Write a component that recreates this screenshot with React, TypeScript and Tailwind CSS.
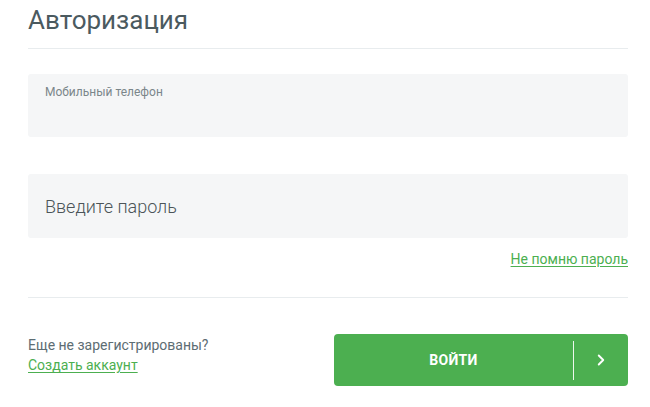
import { ChevronRight } from 'lucide-react'

export default function App() {
  return (
    <div className="w-[650px] h-[407px] bg-white font-['Roboto',sans-serif] px-[28px] pr-[22px]">
      <h1 className="pt-[4px] h-[49px] text-[26px] leading-[33px] text-[#4b5a5f] border-b border-[#e8ecee]">
        Авторизация
      </h1>

      <div className="mt-[25px] h-[63px] rounded-[3px] bg-[#f5f6f7] px-[17px] pt-[10px]">
        <div className="text-[12px] leading-[16px] text-[#7b868a]">Мобильный телефон</div>
      </div>

      <div className="mt-[37px] h-[64px] rounded-[3px] bg-[#f5f6f7] px-[17px] flex items-center">
        <span className="text-[18px] font-light text-[#4b5458] pt-[1px]">Введите пароль</span>
      </div>

      <div className="flex justify-end mt-[11px] h-[20px]">
        <a href="#" className="text-[14px] leading-[20px] text-[#4caf50] underline underline-offset-2">
          Не помню пароль
        </a>
      </div>

      <div className="mt-[28px] border-t border-[#e8ecee]" />

      <div className="mt-[36px] flex items-start justify-between">
        <div className="pt-[1px] text-[14px] leading-[20px]">
          <div className="text-[#5d6d73]">Еще не зарегистрированы?</div>
          <a href="#" className="text-[#4caf50] underline underline-offset-2">Создать аккаунт</a>
        </div>
        <button className="w-[294px] h-[52px] rounded-[4px] bg-[#4caf50] flex items-center text-white">
          <span className="flex-1 text-center text-[14px] font-bold tracking-[0.3px]">ВОЙТИ</span>
          <span className="w-px h-[39px] bg-white/90" />
          <span className="w-[54px] flex justify-center">
            <ChevronRight size={18} strokeWidth={2.5} />
          </span>
        </button>
      </div>
    </div>
  )
}
